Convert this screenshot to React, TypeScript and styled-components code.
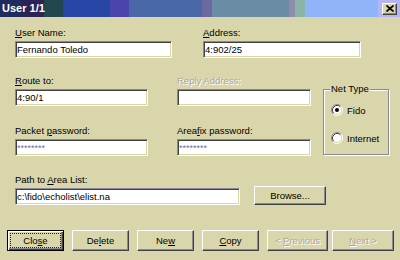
import styled, { createGlobalStyle } from "styled-components";

const FACE = "#dad6ab";
const SHADOW = "#8a8898";
const DARK = "#404048";

const Global = createGlobalStyle`
  html, body {
    margin: 0;
    padding: 0;
    background: ${FACE};
  }
  body {
    width: 400px;
    height: 260px;
    overflow: hidden;
    font-family: "Liberation Sans", Arial, sans-serif;
  }
`;

function RadioMark({ checked }: { checked?: boolean }) {
  return (
    <svg width="12" height="12" viewBox="0 0 12 12">
      <circle cx="6" cy="6" r="5" fill="#fff" />
      <path d="M2.11 9.89 A5.5 5.5 0 0 1 9.89 2.11" stroke={SHADOW} fill="none" />
      <path d="M9.89 2.11 A5.5 5.5 0 0 1 2.11 9.89" stroke="#fff" fill="none" />
      <path d="M2.82 9.18 A4.5 4.5 0 0 1 9.18 2.82" stroke={DARK} fill="none" />
      <path d="M9.18 2.82 A4.5 4.5 0 0 1 2.82 9.18" stroke={FACE} fill="none" />
      {checked && <circle cx="6" cy="6" r="2" fill="#000" />}
    </svg>
  );
}

function App() {
  return (
    <Window>
      <Global />
      <TitleBar>
        <TitleText>User 1/1</TitleText>
        <TitleClose>
          <svg width="8" height="7" viewBox="0 0 8 7">
            <path d="M0.5 0.5 L7.5 6.5 M7.5 0.5 L0.5 6.5" stroke="#000" strokeWidth="1.7" />
          </svg>
        </TitleClose>
      </TitleBar>

      <Form>
        <Row>
          <Field $w={157}>
            <Label><u>U</u>ser Name:</Label>
            <Input readOnly defaultValue="Fernando Toledo" />
          </Field>
          <Field $w={158} style={{ marginLeft: 31 }}>
            <Label><u>A</u>ddress:</Label>
            <Input readOnly defaultValue="4:902/25" />
          </Field>
        </Row>

        <Middle>
          <Column $w={133}>
            <Field $w={133}>
              <Label><u>R</u>oute to:</Label>
              <Input readOnly defaultValue="4:90/1" />
            </Field>
            <Field $w={133}>
              <Label>Packet <u>p</u>assword:</Label>
              <Input readOnly $mask defaultValue="********" />
            </Field>
          </Column>
          <Column $w={134} $ml={29}>
            <Field $w={134}>
              <Label $disabled>Reply Address:</Label>
              <Input readOnly defaultValue="" />
            </Field>
            <Field $w={134}>
              <Label>Area<u>f</u>ix password:</Label>
              <Input readOnly $mask defaultValue="********" />
            </Field>
          </Column>
          <Group>
            <Legend>Net Type</Legend>
            <Radio>
              <RadioMark checked />
              <span>Fido</span>
            </Radio>
            <Radio>
              <RadioMark />
              <span>Internet</span>
            </Radio>
          </Group>
        </Middle>

        <PathRow>
          <Field $w={225}>
            <Label>Path to <u>A</u>rea List:</Label>
            <Input readOnly defaultValue="c:\fido\echolist\elist.na" />
          </Field>
          <Button $w={72} $h={19} style={{ marginLeft: 14 }}>
            <Caption>Browse...</Caption>
          </Button>
        </PathRow>
      </Form>

      <ButtonBar>
        <Button $w={57} $default>
          <Focus>Clo<u>s</u>e</Focus>
        </Button>
        <Button $w={57}>
          <Caption>De<u>l</u>ete</Caption>
        </Button>
        <Button $w={57}>
          <Caption>Ne<u>w</u></Caption>
        </Button>
        <Button $w={57}>
          <Caption><u>C</u>opy</Caption>
        </Button>
        <NavPair>
          <Button $w={61} $disabled>
            <Caption>&lt; <u>P</u>revious</Caption>
          </Button>
          <Button $w={62} $disabled>
            <Caption><u>N</u>ext &gt;</Caption>
          </Button>
        </NavPair>
      </ButtonBar>
    </Window>
  );
}
export default App;

const Window = styled.div`
  width: 400px;
  height: 260px;
  background: ${FACE};
  display: flex;
  flex-direction: column;
`;

const TitleBar = styled.div`
  height: 17px;
  display: flex;
  align-items: center;
  justify-content: space-between;
  padding: 0 3px 0 2px;
  background: linear-gradient(
    90deg,
    #1e2b5e 0 22px,
    #2b2356 22px 44px,
    #23474f 44px 63px,
    #2846a6 63px 110px,
    #4a45ac 110px 129px,
    #4a68a8 129px 202px,
    #6e68a2 202px 212px,
    #6a8ca4 212px 289px,
    #8e8caa 289px 295px,
    #8ab4a8 295px 305px,
    #8fb4f8 305px 378px,
    #b6b4f8 378px 400px
  );
`;

const TitleText = styled.span`
  color: #fff;
  font-weight: bold;
  font-size: 11px;
  line-height: 13px;
`;

const TitleClose = styled.div`
  width: 15px;
  height: 12px;
  box-sizing: border-box;
  background: ${FACE};
  border: 1px solid;
  border-color: #fff ${DARK} ${DARK} #fff;
  box-shadow: inset -1px -1px ${SHADOW};
  display: flex;
  align-items: center;
  justify-content: center;
`;

const Form = styled.div`
  padding: 10px 0 0 15px;
  display: flex;
  flex-direction: column;
`;

const Row = styled.div`
  display: flex;
`;

const Middle = styled.div`
  display: flex;
  margin-top: 17px;
`;

const Column = styled.div<{ $w: number; $ml?: number }>`
  display: flex;
  flex-direction: column;
  gap: 19px;
  width: ${(p) => p.$w}px;
  margin-left: ${(p) => p.$ml ?? 0}px;
`;

const PathRow = styled.div`
  display: flex;
  align-items: flex-end;
  margin-top: 18px;
`;

const Field = styled.div<{ $w: number }>`
  display: flex;
  flex-direction: column;
  gap: 2px;
  width: ${(p) => p.$w}px;
`;

const Label = styled.div<{ $disabled?: boolean }>`
  font-size: 9.5px;
  line-height: 12px;
  height: 12px;
  white-space: nowrap;
  color: ${(p) => (p.$disabled ? "#aca899" : "#000")};
  text-shadow: ${(p) => (p.$disabled ? "1px 1px #fff" : "none")};
`;

const Input = styled.input<{ $mask?: boolean }>`
  box-sizing: border-box;
  width: 100%;
  height: 17px;
  margin: 0;
  padding: 0 1px;
  background: #fff;
  border: 1px solid;
  border-color: ${SHADOW} #fff #fff ${SHADOW};
  box-shadow: inset 1px 1px ${DARK}, inset -1px -1px ${FACE};
  outline: none;
  font-family: "Liberation Sans", Arial, sans-serif;
  font-size: ${(p) => (p.$mask ? "9px" : "9.5px")};
  color: ${(p) => (p.$mask ? "#7270a0" : "#000")};
`;

const Group = styled.div`
  position: relative;
  box-sizing: border-box;
  width: 66px;
  height: 66px;
  margin: 14px 0 0 12px;
  padding: 14px 0 0 7px;
  border: 1px solid ${SHADOW};
  box-shadow: inset 1px 1px #fff, 1px 1px #fff;
  display: flex;
  flex-direction: column;
  gap: 16px;
`;

const Legend = styled.span`
  position: absolute;
  top: -7px;
  left: 6px;
  padding: 0 1px;
  background: ${FACE};
  font-size: 9.5px;
  line-height: 12px;
`;

const Radio = styled.div`
  display: flex;
  align-items: center;
  gap: 4px;
  height: 12px;
  font-size: 9.5px;
`;

const ButtonBar = styled.div`
  display: flex;
  gap: 8px;
  margin-top: 25px;
  padding-left: 7px;
`;

const NavPair = styled.div`
  display: flex;
  gap: 4px;
`;

const Button = styled.div<{ $w: number; $h?: number; $default?: boolean; $disabled?: boolean }>`
  box-sizing: border-box;
  width: ${(p) => p.$w}px;
  height: ${(p) => p.$h ?? 21}px;
  display: flex;
  align-items: center;
  justify-content: center;
  background: ${FACE};
  font-size: 9.5px;
  white-space: nowrap;
  color: ${(p) => (p.$disabled ? "#aca899" : "#000")};
  text-shadow: ${(p) => (p.$disabled ? "1px 1px #fff" : "none")};
  border: 1px solid;
  border-color: ${(p) => (p.$default ? "#000" : `#fff ${DARK} ${DARK} #fff`)};
  box-shadow: ${(p) =>
    p.$default
      ? `inset 1px 1px #fff, inset -1px -1px ${DARK}, inset -2px -2px ${SHADOW}`
      : `inset -1px -1px ${SHADOW}`};
  padding: ${(p) => (p.$default ? "2px" : "0")};
`;

const Caption = styled.span`
  white-space: pre;
`;

const Focus = styled.span`
  flex: 1;
  align-self: stretch;
  display: flex;
  align-items: center;
  justify-content: center;
  border: 1px dotted #222;
`;
